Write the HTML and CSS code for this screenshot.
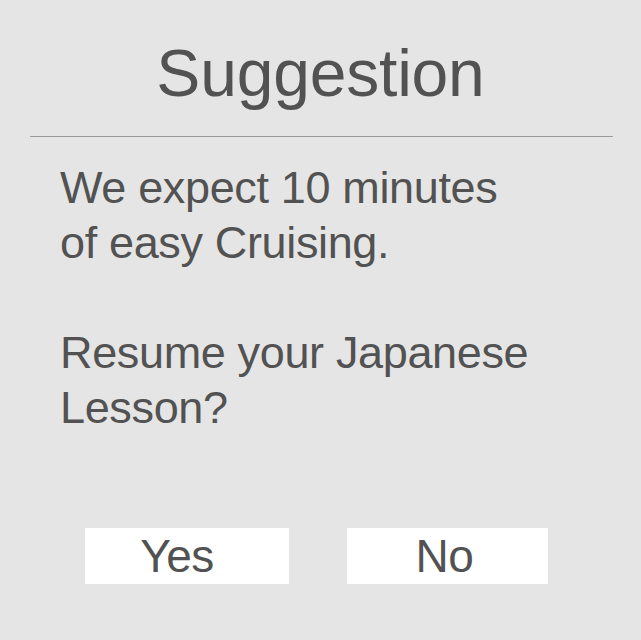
FILE: index.html
```
<!DOCTYPE html>
<html>
<head>
<meta charset="utf-8">
<link rel="stylesheet" href="styles.css">
</head>
<body>
<div class="dialog">
  <h1 class="title">Suggestion</h1>
  <div class="divider"></div>
  <div class="message">
    <p class="para">We expect 10 minutes<br>of easy Cruising.</p>
    <p class="para">Resume your Japanese<br>Lesson?</p>
  </div>
  <div class="actions">
    <button class="btn btn-yes">Yes</button>
    <button class="btn btn-no">No</button>
  </div>
</div>
</body>
</html>
```
FILE: styles.css
```
html, body {
  margin: 0;
  padding: 0;
  background: #e5e5e5;
}
body {
  width: 641px;
  height: 640px;
  overflow: hidden;
  font-family: "Liberation Sans", Arial, sans-serif;
  color: #525252;
}
.dialog {
  display: flex;
  flex-direction: column;
  padding-top: 33px;
}
.title {
  margin: 0;
  font-weight: normal;
  font-size: 66px;
  line-height: 80px;
  text-align: center;
  letter-spacing: -0.2px;
}
.divider {
  margin: 23px 28px 0 30px;
  height: 1px;
  background: #9a9a9a;
}
.message {
  padding: 23px 0 0 60px;
}
.para {
  margin: 0 0 55px 0;
  font-size: 45px;
  line-height: 55px;
  letter-spacing: -0.35px;
}
.para:last-child {
  margin-bottom: 0;
}
.actions {
  display: flex;
  gap: 58px;
  padding-left: 85px;
  margin-top: 93px;
}
.btn {
  border: none;
  margin: 0;
  padding: 0;
  background: #ffffff;
  height: 56px;
  font-family: "Liberation Sans", Arial, sans-serif;
  font-size: 46px;
  line-height: 56px;
  color: #525252;
  text-align: center;
  letter-spacing: -0.5px;
}
.btn-yes {
  width: 204px;
  padding-right: 20px;
}
.btn-no {
  width: 201px;
  padding-right: 6px;
}
```
